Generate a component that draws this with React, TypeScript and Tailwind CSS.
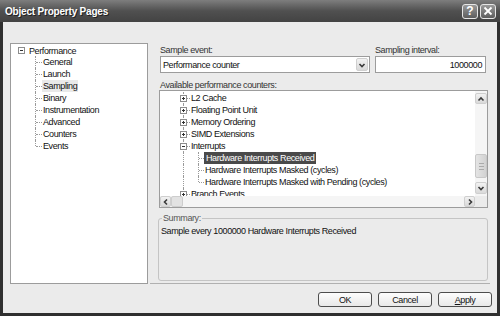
import type { ReactNode } from 'react';

const font = "font-['Liberation_Sans',Arial,sans-serif]";
const txt = 'text-[9px] tracking-[-0.4px] leading-[12px] text-[#111]';

type Dir = 'up' | 'down' | 'left' | 'right';

const CHEVRONS: Record<Dir, string> = {
  up: 'M1.5 5.5 L4 3 L6.5 5.5',
  down: 'M1.5 3 L4 5.5 L6.5 3',
  left: 'M5 1.5 L2.5 4 L5 6.5',
  right: 'M3 1.5 L5.5 4 L3 6.5',
};

function Chevron({ dir }: { dir: Dir }) {
  return (
    <svg width="8" height="8" viewBox="0 0 8 8">
      <path d={CHEVRONS[dir]} fill="none" stroke="#3a3a3a" strokeWidth="1.6" />
    </svg>
  );
}

function ScrollButton({ dir, className = '' }: { dir: Dir; className?: string }) {
  return (
    <div
      className={`flex items-center justify-center rounded-[2px] border border-[#cfcfcf] bg-gradient-to-b from-[#f2f2f2] to-[#d9d9d9] ${className}`}
    >
      <Chevron dir={dir} />
    </div>
  );
}

function ExpandBox({ open }: { open: boolean }) {
  return (
    <div className="relative z-10 flex h-[7px] w-[7px] items-center justify-center border border-[#8c8c8c] bg-white">
      <div className="h-px w-[3px] bg-[#333]" />
      {!open && <div className="absolute h-[3px] w-px bg-[#333]" />}
    </div>
  );
}

// one column of tree connector: vertical line (full / top half / none) plus optional tick
function Connector({ v, tick, width }: { v: 'full' | 'top' | 'none'; tick: boolean; width: string }) {
  return (
    <div className={`flex h-full shrink-0 ${width}`}>
      <div className="flex h-full w-px flex-col">
        {v !== 'none' && (
          <div className={`w-px border-l border-dotted border-[#9a9a9a] ${v === 'full' ? 'h-full' : 'h-1/2'}`} />
        )}
      </div>
      {tick && <div className="mt-[6px] h-0 flex-1 self-start border-t border-dotted border-[#9a9a9a]" />}
    </div>
  );
}

function Label({ children, selected, light }: { children: ReactNode; selected?: boolean; light?: boolean }) {
  if (selected) {
    return <span className={`${txt} whitespace-nowrap bg-[#4a4a4a] px-[2px] !text-white`}>{children}</span>;
  }
  if (light) {
    return <span className={`${txt} whitespace-nowrap bg-[#e9e9e9] px-[1px]`}>{children}</span>;
  }
  return <span className={`${txt} whitespace-nowrap px-[1px]`}>{children}</span>;
}

function PageTree() {
  const pages = ['General', 'Launch', 'Sampling', 'Binary', 'Instrumentation', 'Advanced', 'Counters', 'Events'];
  return (
    <div className="h-[241px] w-[138px] shrink-0 border border-[#9c9c9c] bg-white pl-[7px] pt-[1px]">
      <div className="flex h-[11px] items-center">
        <ExpandBox open />
        <span className={`${txt} ml-[4px] whitespace-nowrap`}>Performance</span>
      </div>
      {pages.map((p, i) => (
        <div key={p} className="flex h-[12px] items-center">
          <div className="w-[17px] shrink-0" />
          <Connector v={i === pages.length - 1 ? 'top' : 'full'} tick width="w-[7px]" />
          <Label light={p === 'Sampling'}>{p}</Label>
        </div>
      ))}
    </div>
  );
}

type CounterRow = { text: string; level: 1 | 2; open?: boolean; selected?: boolean; lastChild?: boolean };

const COUNTERS: CounterRow[] = [
  { text: 'L2 Cache', level: 1 },
  { text: 'Floating Point Unit', level: 1 },
  { text: 'Memory Ordering', level: 1 },
  { text: 'SIMD Extensions', level: 1 },
  { text: 'Interrupts', level: 1, open: true },
  { text: 'Hardware Interrupts Received', level: 2, selected: true },
  { text: 'Hardware Interrupts Masked (cycles)', level: 2 },
  { text: 'Hardware Interrupts Masked with Pending (cycles)', level: 2, lastChild: true },
  { text: 'Branch Events', level: 1 },
];

function CounterList() {
  return (
    <div className="-ml-[1px] flex h-[118px] w-[329px] flex-col border border-[#9c9c9c] bg-white">
      <div className="flex min-h-0 flex-1">
        <div className="min-w-0 flex-1 overflow-hidden pl-[20px] pt-[1px]">
          {COUNTERS.map((r) =>
            r.level === 1 ? (
              <div key={r.text} className="relative flex h-[12px] items-center">
                <div className="flex h-full w-[7px] items-center justify-center">
                  <div className="absolute left-[3px] top-0 h-full border-l border-dotted border-[#9a9a9a]" />
                  <ExpandBox open={!!r.open} />
                </div>
                <div className="w-[3px] border-t border-dotted border-[#9a9a9a]" />
                <Label>{r.text}</Label>
              </div>
            ) : (
              <div key={r.text} className="flex h-[12px] items-center">
                <Connector v="full" tick={false} width="w-[15px] ml-[3px]" />
                <Connector v={r.lastChild ? 'top' : 'full'} tick width="w-[6px]" />
                <Label selected={r.selected}>{r.text}</Label>
              </div>
            ),
          )}
        </div>
        <div className="flex w-[12px] shrink-0 flex-col bg-[#f5f5f5]">
          <ScrollButton dir="up" className="mt-[2px] h-[11px]" />
          <div className="flex-1 pt-[50px]">
            <div className="flex h-[24px] flex-col items-center justify-center gap-[2px] rounded-[2px] border border-[#c8c8c8] bg-gradient-to-r from-[#e4e4e4] to-[#d2d2d2]">
              <div className="h-px w-[5px] bg-[#aaa]" />
              <div className="h-px w-[5px] bg-[#aaa]" />
              <div className="h-px w-[5px] bg-[#aaa]" />
            </div>
          </div>
          <ScrollButton dir="down" className="mb-[2px] h-[12px]" />
        </div>
      </div>
      <div className="flex h-[11px] shrink-0">
        <div className="flex flex-1 bg-[#f5f5f5]">
          <ScrollButton dir="left" className="w-[11px]" />
          <div className="h-full w-[12px] rounded-[2px] border border-[#cdcdcd] bg-[#e2e2e2]" />
          <div className="flex-1" />
          <ScrollButton dir="right" className="w-[11px]" />
        </div>
        <div className="w-[12px] bg-[#ebebeb]" />
      </div>
    </div>
  );
}

function PushButton({ children }: { children: ReactNode }) {
  return (
    <div
      className={`flex h-[15px] w-[54px] items-center justify-center rounded-[3px] border border-[#4d4d4d] bg-gradient-to-b from-[#fdfdfd] to-[#e8e8e8] ${txt}`}
    >
      {children}
    </div>
  );
}

export default function App() {
  return (
    <div className={`flex h-[316px] w-[500px] flex-col bg-[#2f2f2f] ${font}`}>
      {/* title bar */}
      <div className="flex h-[22px] shrink-0 items-center bg-gradient-to-b from-[#7e7e7e] via-[#505050] to-[#434343] pl-[5px] pr-[4px]">
        <span className="text-[10px] font-bold tracking-[-0.2px] text-white [text-shadow:1px_1px_0_#222]">
          Object Property Pages
        </span>
        <div className="ml-auto flex gap-[2px]">
          <div className="flex h-[15px] w-[16px] items-center justify-center rounded-[3px] border border-[#e6e6e6] bg-gradient-to-b from-[#9a9a9a] to-[#5e5e5e] text-[12px] font-bold leading-none text-white">
            ?
          </div>
          <div className="flex h-[15px] w-[16px] items-center justify-center rounded-[3px] border border-[#e6e6e6] bg-gradient-to-b from-[#9a9a9a] to-[#5e5e5e]">
            <svg width="10" height="10" viewBox="0 0 10 10">
              <path d="M1.5 1.5 L8.5 8.5 M8.5 1.5 L1.5 8.5" stroke="#fff" strokeWidth="1.8" />
            </svg>
          </div>
        </div>
      </div>

      {/* body */}
      <div className="mx-[3px] mb-[3px] flex flex-1 flex-col bg-[#ebebeb]">
        <div className="flex pl-[7px] pt-[21px]">
          <PageTree />

          <div className="ml-[2px] h-[241px] w-[340px] border-b border-[#b0b0b0] pl-[10px]">
            <div className="flex">
              <div className="w-[210px]">
                <div className={`${txt} mt-[1px] h-[11px] leading-[11px] !text-[#333]`}>Sample event:</div>
                <div className="mt-[1px] flex h-[17px] items-center border border-[#9c9c9c] bg-white pl-[2px] pr-[1px]">
                  <span className={`${txt} flex-1`}>Performance counter</span>
                  <ScrollButton dir="down" className="h-[13px] w-[12px]" />
                </div>
              </div>
              <div className="ml-[5px] w-[111px]">
                <div className={`${txt} mt-[1px] h-[11px] leading-[11px] !text-[#333]`}>Sampling interval:</div>
                <div className="mt-[1px] flex h-[17px] items-center justify-end border border-[#9c9c9c] bg-white pr-[3px]">
                  <span className={txt}>1000000</span>
                </div>
              </div>
            </div>

            <div className={`${txt} mt-[6px] h-[11px] leading-[11px] !text-[#333]`}>Available performance counters:</div>
            <CounterList />

            <fieldset className="-ml-[2px] mt-[4px] h-[69px] w-[330px] rounded-[3px] border border-[#c4c4c4] pl-[3px]">
              <legend className={`${txt} px-[1px] leading-[11px] !text-[#555]`}>Summary:</legend>
              <div className={`${txt} -ml-[1px] pt-[1px]`}>Sample every 1000000 Hardware Interrupts Received</div>
            </fieldset>
          </div>
        </div>

        <div className="mt-[8px] flex justify-end gap-[6px] pr-[5px]">
          <PushButton>OK</PushButton>
          <PushButton>Cancel</PushButton>
          <PushButton>
            <span className="underline">A</span>pply
          </PushButton>
        </div>
      </div>
    </div>
  );
}
